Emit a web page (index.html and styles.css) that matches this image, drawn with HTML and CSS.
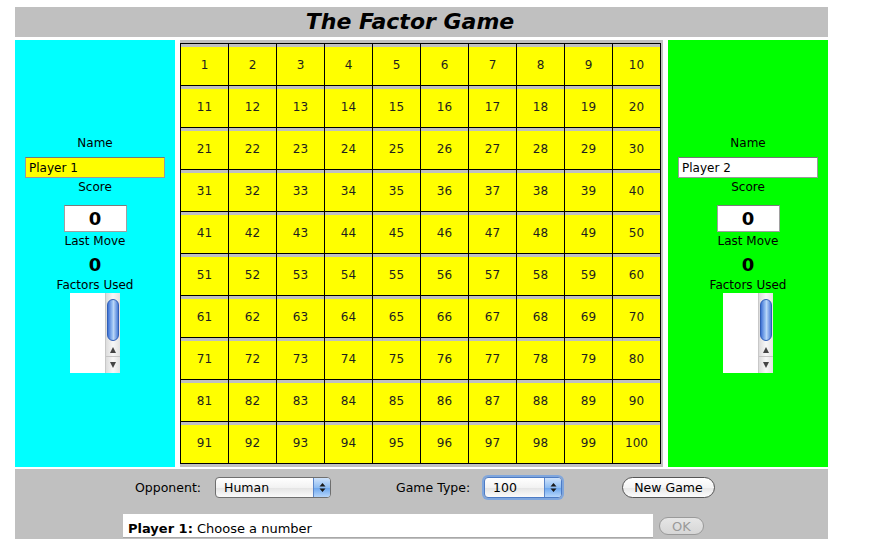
FILE: index.html
```html
<!DOCTYPE html>
<html>
<head>
<meta charset="utf-8">
<title>The Factor Game</title>
<link rel="stylesheet" href="styles.css">
</head>
<body>
<div class="page">
  <div class="titlebar"><h1 class="title">The Factor Game</h1></div>
  <div class="main">
    <div class="side p1">
      <div class="label">Name</div>
      <div class="namebox yellow">Player 1</div>
      <div class="label gap2">Score</div>
      <div class="scorebox">0</div>
      <div class="label gap2">Last Move</div>
      <div class="bigzero">0</div>
      <div class="label gap2">Factors Used</div>
      <div class="listbox">
        <div class="listarea"></div>
        <div class="scrollbar">
          <div class="thumb"></div>
          <div class="arrow up"></div>
          <div class="arrow down"></div>
        </div>
      </div>
    </div>
    <div class="board">
      <div class="grid">
        <div class="cell">1</div><div class="cell">2</div><div class="cell">3</div><div class="cell">4</div><div class="cell">5</div><div class="cell">6</div><div class="cell">7</div><div class="cell">8</div><div class="cell">9</div><div class="cell">10</div>
        <div class="cell">11</div><div class="cell">12</div><div class="cell">13</div><div class="cell">14</div><div class="cell">15</div><div class="cell">16</div><div class="cell">17</div><div class="cell">18</div><div class="cell">19</div><div class="cell">20</div>
        <div class="cell">21</div><div class="cell">22</div><div class="cell">23</div><div class="cell">24</div><div class="cell">25</div><div class="cell">26</div><div class="cell">27</div><div class="cell">28</div><div class="cell">29</div><div class="cell">30</div>
        <div class="cell">31</div><div class="cell">32</div><div class="cell">33</div><div class="cell">34</div><div class="cell">35</div><div class="cell">36</div><div class="cell">37</div><div class="cell">38</div><div class="cell">39</div><div class="cell">40</div>
        <div class="cell">41</div><div class="cell">42</div><div class="cell">43</div><div class="cell">44</div><div class="cell">45</div><div class="cell">46</div><div class="cell">47</div><div class="cell">48</div><div class="cell">49</div><div class="cell">50</div>
        <div class="cell">51</div><div class="cell">52</div><div class="cell">53</div><div class="cell">54</div><div class="cell">55</div><div class="cell">56</div><div class="cell">57</div><div class="cell">58</div><div class="cell">59</div><div class="cell">60</div>
        <div class="cell">61</div><div class="cell">62</div><div class="cell">63</div><div class="cell">64</div><div class="cell">65</div><div class="cell">66</div><div class="cell">67</div><div class="cell">68</div><div class="cell">69</div><div class="cell">70</div>
        <div class="cell">71</div><div class="cell">72</div><div class="cell">73</div><div class="cell">74</div><div class="cell">75</div><div class="cell">76</div><div class="cell">77</div><div class="cell">78</div><div class="cell">79</div><div class="cell">80</div>
        <div class="cell">81</div><div class="cell">82</div><div class="cell">83</div><div class="cell">84</div><div class="cell">85</div><div class="cell">86</div><div class="cell">87</div><div class="cell">88</div><div class="cell">89</div><div class="cell">90</div>
        <div class="cell">91</div><div class="cell">92</div><div class="cell">93</div><div class="cell">94</div><div class="cell">95</div><div class="cell">96</div><div class="cell">97</div><div class="cell">98</div><div class="cell">99</div><div class="cell">100</div>
      </div>
    </div>
    <div class="side p2">
      <div class="label">Name</div>
      <div class="namebox">Player 2</div>
      <div class="label gap2">Score</div>
      <div class="scorebox">0</div>
      <div class="label gap2">Last Move</div>
      <div class="bigzero">0</div>
      <div class="label gap2">Factors Used</div>
      <div class="listbox">
        <div class="listarea"></div>
        <div class="scrollbar">
          <div class="thumb"></div>
          <div class="arrow up"></div>
          <div class="arrow down"></div>
        </div>
      </div>
    </div>
  </div>
  <div class="controls">
    <div class="ctlrow">
      <span class="ctllabel opp">Opponent:</span>
      <div class="popup human"><span class="popval">Human</span><span class="stepper"><svg width="7" height="11" viewBox="0 0 7 11"><path d="M3.5 1 L6.5 4.5 L0.5 4.5 Z M3.5 10 L6.5 6.5 L0.5 6.5 Z" fill="#1a1a1a"/></svg></span></div>
      <span class="ctllabel gt">Game Type:</span>
      <div class="popup focus size"><span class="popval">100</span><span class="stepper"><svg width="7" height="11" viewBox="0 0 7 11"><path d="M3.5 1 L6.5 4.5 L0.5 4.5 Z M3.5 10 L6.5 6.5 L0.5 6.5 Z" fill="#1a1a1a"/></svg></span></div>
      <div class="btn newgame">New Game</div>
    </div>
    <div class="ctlrow2">
      <div class="status"><b>Player 1:</b> Choose a number</div>
      <div class="btn ok">OK</div>
    </div>
  </div>
</div>
</body>
</html>
```
FILE: styles.css
```css
* { box-sizing: border-box; }
html, body { margin: 0; padding: 0; background: #fff; }
body {
  font-family: "DejaVu Sans", "Liberation Sans", sans-serif;
  font-size: 12px;
  color: #000;
}
.page {
  width: 813px;
  margin: 7px 0 0 15px;
}
.titlebar {
  height: 30px;
  background: #c0c0c0;
}
.title {
  margin: 0;
  padding-right: 23px;
  font-size: 22px;
  line-height: 30px;
  font-weight: bold;
  font-style: italic;
  text-align: center;
}
.main {
  display: flex;
  gap: 5px;
  margin-top: 3px;
  height: 427px;
}
.side {
  width: 160px;
  display: flex;
  flex-direction: column;
  align-items: center;
  justify-content: center;
  padding-top: 2px;
}
.p1 { background: #00ffff; }
.p2 { background: #00ff00; }
.label {
  height: 15px;
  line-height: 15px;
  font-size: 12px;
}
.gap2 { margin-top: 2px; }
.namebox {
  margin-top: 6px;
  width: 140px;
  height: 21px;
  background: #fff;
  border: 1px solid #9a9a9a;
  border-top-color: #777;
  padding-left: 3px;
  line-height: 20px;
  font-size: 12px;
}
.namebox.yellow { background: #ffff00; }
.scorebox {
  margin-top: 10px;
  width: 63px;
  height: 27px;
  background: #fff;
  border: 1px solid #a0a0a0;
  border-top-color: #7a7a7a;
  text-align: center;
  font-weight: bold;
  font-size: 18px;
  line-height: 25px;
}
.bigzero {
  margin-top: 5px;
  height: 22px;
  line-height: 22px;
  font-weight: bold;
  font-size: 18px;
}
.listbox {
  width: 50px;
  height: 80px;
  display: flex;
  background: #fff;
}
.listarea { flex: 1; }
.scrollbar {
  width: 15px;
  border-left: 1px solid #c8c8c8;
  background: linear-gradient(to right, #dcdcdc, #f7f7f7 50%, #e2e2e2);
  display: flex;
  flex-direction: column;
  align-items: center;
}
.thumb {
  margin-top: 6px;
  width: 12px;
  height: 42px;
  border-radius: 6px;
  border: 1px solid #2f5fb8;
  background: linear-gradient(to right, #3f72d4, #9cc4f4 45%, #b9d6f7 55%, #4a7ed8);
}
.arrow {
  width: 14px;
  height: 15px;
  position: relative;
}
.arrow.up { margin-top: 1px; border-bottom: 1px solid #c4c4c4; }
.arrow.down { height: 15px; }
.arrow::after {
  content: "";
  position: absolute;
  left: 4px;
  border-left: 3.5px solid transparent;
  border-right: 3.5px solid transparent;
}
.arrow.up::after { top: 5px; border-bottom: 6px solid #444; }
.arrow.down::after { top: 5px; border-top: 6px solid #444; }

.board {
  width: 483px;
  background: #c0c0c0;
  padding-top: 3px;
}
.grid {
  display: grid;
  grid-template-columns: repeat(10, 48px);
  grid-template-rows: repeat(10, 42px);
  width: 481px;
  border-right: 1px solid #000;
  border-bottom: 1px solid #000;
}
.cell {
  border-left: 1px solid #000;
  border-top: 1px solid #000;
  background: linear-gradient(#c0c0c0 0 3px, #ffff00 3px);
  padding-top: 1px;
  display: flex;
  align-items: center;
  justify-content: center;
  font-size: 12px;
  color: #1e1e1e;
}

.controls {
  margin-top: 2px;
  height: 70px;
  background: #c0c0c0;
  padding-top: 8px;
}
.ctlrow {
  display: flex;
  align-items: center;
  height: 21px;
  padding-left: 120px;
}
.ctllabel { font-size: 12.5px; }
.opp { width: 80px; }
.gt { width: 88px; margin-left: 65px; }
.popup {
  height: 21px;
  display: flex;
  border: 1px solid #6f6f6f;
  border-radius: 4px;
  background: linear-gradient(#ffffff, #f2f2f2 50%, #e3e3e3 51%, #fbfbfb);
  overflow: hidden;
}
.human { width: 116px; }
.size { width: 78px; }
.focus { box-shadow: 0 0 0 2px #7fa6dd; border-color: #4d7bc4; }
.popval {
  flex: 1;
  padding-left: 8px;
  line-height: 19px;
  font-size: 12.5px;
}
.stepper {
  width: 17px;
  display: flex;
  align-items: center;
  justify-content: center;
  border-left: 1px solid #5b86c9;
  background: linear-gradient(#cfe3fb, #8fbdf2 50%, #6aa5ee 51%, #b6d6fb);
}
.btn {
  display: flex;
  align-items: center;
  justify-content: center;
  border-radius: 11px;
  font-size: 12.5px;
}
.newgame {
  margin-left: 60px;
  width: 93px;
  height: 21px;
  border: 1px solid #555;
  background: linear-gradient(#ffffff, #f4f4f4 50%, #e6e6e6 51%, #fdfdfd);
}
.ctlrow2 {
  display: flex;
  align-items: center;
  margin-top: 16px;
  padding-left: 108px;
}
.status {
  width: 530px;
  height: 24px;
  background: #fff;
  border-bottom: 1px solid #a8a8a8;
  padding: 6px 0 0 5px;
  font-size: 13px;
  line-height: 18px;
}
.ok {
  margin-left: 6px;
  width: 45px;
  height: 18px;
  border: 1px solid #9a9a9a;
  border-radius: 9px;
  color: #9a9a9a;
  font-size: 13px;
  background: linear-gradient(#e6e6e6, #d6d6d6);
}
```
